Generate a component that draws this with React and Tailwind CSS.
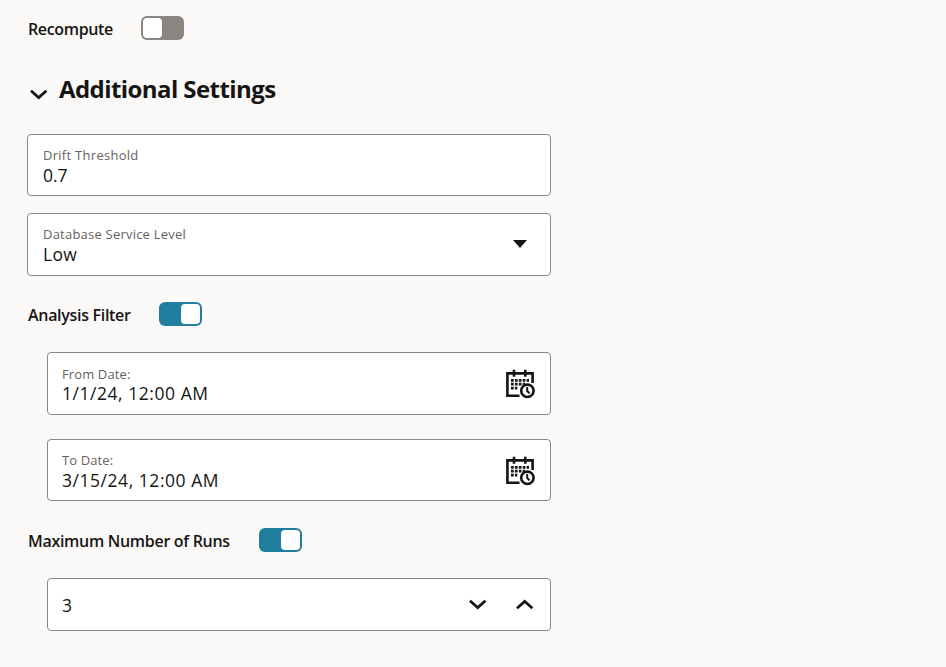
function Toggle({ on }) {
  return (
    <span
      role="switch"
      aria-checked={on}
      className={`flex h-6 w-[43px] shrink-0 rounded-md p-0.5 ${on ? "justify-end bg-[#227e9e]" : "justify-start bg-[#8b8580]"}`}
    >
      <span className="h-5 w-[19px] rounded bg-white" />
    </span>
  );
}

function Chevron({ up, className = "" }) {
  return (
    <svg viewBox="0 0 18 12" className={`h-3 w-[18px] shrink-0 ${className}`} fill="none" stroke="#161513" strokeWidth="2.7">
      <path d={up ? "M1 9.2 8.7 2.4l7.7 6.8" : "M1 1.8 8.7 8.6l7.7-6.8"} />
    </svg>
  );
}

function CalendarClock() {
  return (
    <svg viewBox="0 0 30 30" className="mt-px h-[30px] w-[30px] shrink-0" fill="none" stroke="#161513">
      <path d="M14.5 26.8H2.4V4.4h25.2V14" strokeWidth="2.6" />
      <path d="M9 .8v7M20.3 .8v7" strokeWidth="2.6" />
      <path d="M6 11.3H24M6 15.2H20M6 19.1H12.3" strokeWidth="2.7" strokeDasharray="2.7 1.2" />
      <circle cx="22.4" cy="21.8" r="6.2" strokeWidth="2.6" />
      <path d="M22.2 18v4l2.4 2.4" strokeWidth="2" />
    </svg>
  );
}

function Field({ label, value, className, labelClass = "", valueClass = "leading-5", children }) {
  return (
    <div className={`flex items-center justify-between rounded border border-[#8b8987] bg-white ${className}`}>
      <div className="flex flex-col whitespace-nowrap">
        {label && <span className={`text-[13px] leading-5 font-medium text-[#65625f] ${labelClass}`}>{label}</span>}
        <span className={`text-[17.5px] ${valueClass}`}>{value}</span>
      </div>
      {children}
    </div>
  );
}

function Setting({ label, on, className = "", labelClass }) {
  return (
    <div className={`flex h-6 items-center ${className}`}>
      <span className={`shrink-0 whitespace-nowrap pt-0.5 text-[16px] leading-6 font-semibold ${labelClass}`}>{label}</span>
      <Toggle on={on} />
    </div>
  );
}

export default function App() {
  return (
    <main className="h-[667px] w-full overflow-hidden bg-[#fbf9f8] pt-4 pl-[27px] font-['Open_Sans','Noto_Sans',sans-serif] text-[#161513]">
      <div className="flex w-[524px] flex-col">
        <Setting label="Recompute" on={false} labelClass="w-[114px] pl-px tracking-[-0.35px]" />
        <div className="mt-[33px] flex h-8 items-center">
          <Chevron className="mt-3 ml-[3px]" />
          <h2 className="ml-[11px] text-[24px] leading-8 font-bold tracking-[-0.58px] whitespace-nowrap">Additional Settings</h2>
        </div>
        <Field label="Drift Threshold" value="0.7" className="mt-[29px] h-[62px] pl-[15px]" labelClass="tracking-[0.28px]" />
        <Field label="Database Service Level" value="Low" className="mt-[17px] h-[63px] pr-[23px] pb-px pl-[15px]" labelClass="tracking-[0.22px]" valueClass="leading-5 tracking-[0.3px]">
          <svg viewBox="0 0 14 8" className="h-2 w-3.5">
            <path d="M0 0h14L7 8z" fill="#161513" />
          </svg>
        </Field>
        <Setting label="Analysis Filter" on className="mt-[26px]" labelClass="w-[132px] pl-px tracking-[-0.3px]" />
        <Field label="From Date:" value="1/1/24, 12:00 AM" className="mt-[26px] ml-5 h-[63px] pr-[15px] pl-3.5" labelClass="tracking-[0.12px]" valueClass="leading-[19px] tracking-[0.54px]">
          <CalendarClock />
        </Field>
        <Field label="To Date:" value="3/15/24, 12:00 AM" className="mt-6 ml-5 h-[62px] pr-[15px] pl-3.5" labelClass="tracking-[0.12px]" valueClass="leading-5 tracking-[0.54px]">
          <CalendarClock />
        </Field>
        <Setting label="Maximum Number of Runs" on className="mt-[27px]" labelClass="w-[232px] pl-px tracking-[-0.3px]" />
        <Field value="3" className="mt-[26px] ml-5 h-[53px] pr-4 pl-3.5">
          <div className="flex gap-[29px]">
            <Chevron />
            <Chevron up />
          </div>
        </Field>
      </div>
    </main>
  );
}
